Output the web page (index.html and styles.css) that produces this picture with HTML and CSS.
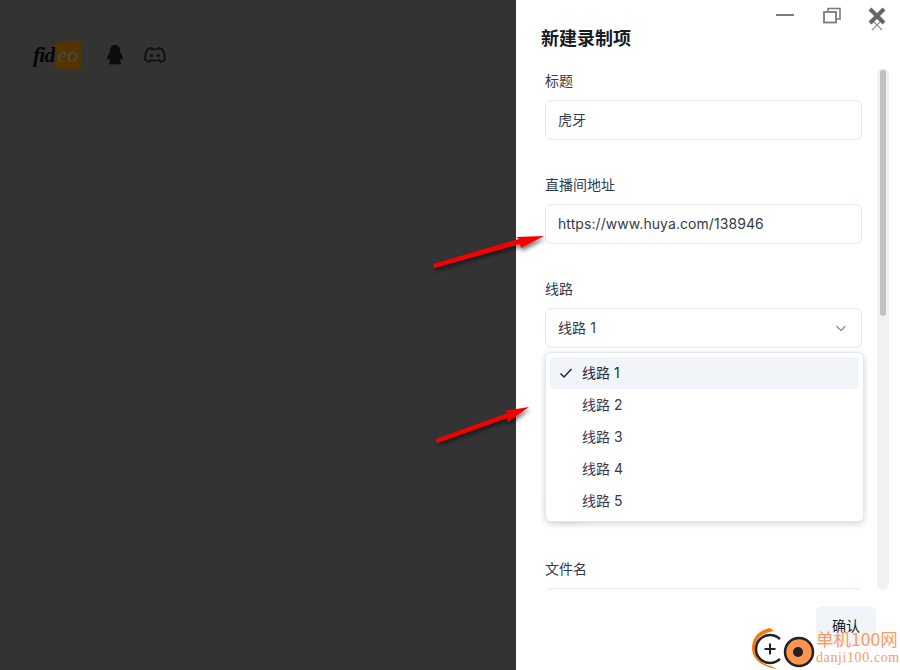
FILE: index.html
```html
<!DOCTYPE html>
<html lang="zh-CN">
<head>
    <meta charset="UTF-8">
    <title>新建录制项</title>
    <link rel="stylesheet" href="styles.css">
</head>
<body>
    <div class="backdrop">
        <div class="brand">
            <div class="logo"><span class="logo-fid">fid</span><span class="logo-eo">eo</span></div>
            <svg class="social" width="20" height="22" viewBox="0 0 20 22">
                <path fill="#0c0c0c" d="M10 1c-3.300 0-5 2.500-5 5.500 0 1.300-.5 2.300-1.200 3.500C2.800 11.800 2 13.500 2 15.300c0 .8.500 1 1.200.3l.8-1c.3 1.200.8 2.100 1.600 2.900-1 .4-1.800 1-1.800 1.700 0 .9 1.700 1.300 3.500 1.300 1.200 0 2.100-.3 2.700-.8.600.5 1.500.8 2.700.8 1.800 0 3.500-.4 3.500-1.300 0-.7-.8-1.300-1.800-1.700.8-.8 1.300-1.700 1.600-2.900l.8 1c.7.700 1.200.5 1.200-.3 0-1.800-.8-3.500-1.800-5.300C15.500 8.800 15 7.800 15 6.500 15 3.500 13.300 1 10 1z"/>
            </svg>
            <svg class="social" width="22" height="18" viewBox="0 0 22 18">
                <path fill="none" stroke="#111" stroke-width="1.800" stroke-linejoin="round" d="M7.500 2C5.800 2.300 4.400 2.800 3.300 3.500 1.800 6 1 9.500 1 13.500c1.200 1.200 2.800 2 4.500 2.500l1.200-2c1.400.5 2.900.7 4.300.7s2.900-.2 4.300-.7l1.200 2c1.700-.5 3.300-1.300 4.500-2.500 0-4-.8-7.500-2.300-10C17.600 2.800 16.200 2.300 14.500 2L14 3.300c-2-.3-4-.3-6 0z"/>
                <circle cx="7.600" cy="9.400" r="1.500" fill="#111"/>
                <circle cx="14.400" cy="9.400" r="1.500" fill="#111"/>
            </svg>
        </div>
    </div>

    <div class="drawer">
        <h2 class="drawer-title">新建录制项</h2>

        <div class="scroll-wrap">
            <div class="form-area">
                <div class="field">
                    <label>标题</label>
                    <div class="input">虎牙</div>
                </div>
                <div class="field">
                    <label>直播间地址</label>
                    <div class="input">https://www.huya.com/138946</div>
                </div>
                <div class="field">
                    <label>线路</label>
                    <div class="input select">
                        <span>线路 1</span>
                        <svg width="16" height="16" viewBox="0 0 16 16"><path d="M3.500 6l4.500 4.500L12.500 6" fill="none" stroke="#8b8f96" stroke-width="1.300"/></svg>
                    </div>
                </div>
                <div class="field">
                    <label>清晰度</label>
                    <div class="input"></div>
                </div>
                <div class="field field-switch">
                    <label>自动录制</label>
                    <div class="switch"></div>
                </div>
                <div class="field">
                    <label>文件名</label>
                    <div class="input"></div>
                </div>
            </div>
            <div class="scrollbar"><div class="thumb"></div></div>
        </div>

        <div class="footer">
            <button class="confirm">确认</button>
        </div>

        <ul class="dropdown">
            <li class="option active">
                <svg width="16" height="16" viewBox="0 0 16 16"><path d="M2.500 8.500l3.500 3.500 7.500-8" fill="none" stroke="#1e293b" stroke-width="1.500"/></svg>
                <span>线路 1</span>
            </li>
            <li class="option"><span>线路 2</span></li>
            <li class="option"><span>线路 3</span></li>
            <li class="option"><span>线路 4</span></li>
            <li class="option"><span>线路 5</span></li>
        </ul>

        <div class="win-controls">
            <svg width="18" height="18" viewBox="0 0 18 18"><path d="M0 9h18" stroke="#7b7b7b" stroke-width="2"/></svg>
            <svg width="18" height="18" viewBox="0 0 18 18"><path d="M5 5V2.500h12V13h-4" fill="none" stroke="#7b7b7b" stroke-width="1.600"/><rect x="1" y="6" width="12" height="10.500" fill="none" stroke="#7b7b7b" stroke-width="1.800"/></svg>
            <svg class="win-close" width="18" height="26" viewBox="0 0 18 26">
                <path d="M4 14l10 10M14 14L4 24" stroke="#8c93a0" stroke-width="1.300" fill="none"/>
                <path d="M2 3l14 14M16 3L2 17" stroke="#666" stroke-width="4"/>
            </svg>
        </div>
    </div>

    <!-- annotation arrows pasted over the screenshot -->
    <svg class="arrows" width="900" height="670" viewBox="0 0 900 670">
        <defs>
            <filter id="arrowShadow" x="-20%" y="-40%" width="140%" height="200%"><feDropShadow dx="1" dy="3" stdDeviation="2" flood-color="#000" flood-opacity=".55"/></filter>
        </defs>
        <g fill="#f50000" filter="url(#arrowShadow)">
            <path d="M433 264l86-25-3-2 28-1-23 12-1-4-86 24z"/>
            <path d="M436 439l72-26-4-2 25-4-21 15-1-4-70 25z"/>
        </g>
    </svg>

    <div class="watermark">
        <svg width="66" height="44" viewBox="0 0 66 44">
            <path d="M20 1C9 3 2 11 2 21c0 11 10 19 25 21-2-1-4-2-6-3C11 37 5 30 5 21 5 12 12 6 24 4z" fill="#f47a12"/>
            <circle cx="20" cy="22" r="14" fill="#fff"/>
            <path d="M29.900 12.100A14 14 0 1 0 29.900 31.900" fill="none" stroke="#222" stroke-width="2.500"/>
            <path d="M20 16.500v11M14.500 22h11" stroke="#222" stroke-width="2"/>
            <circle cx="49" cy="25" r="14" fill="#ff9350" stroke="#222" stroke-width="2.500"/>
            <circle cx="48" cy="25" r="5" fill="#222"/>
        </svg>
        <div class="watermark-text">
            <span class="wm-cn">单机100网</span>
            <span class="wm-en">danji100.com</span>
        </div>
    </div>
</body>
</html>
```

FILE: styles.css
```css
* { box-sizing: border-box; }
html, body { margin: 0; height: 100%; }
body {
    display: flex;
    overflow: hidden;
    position: relative;
    font-family: Inter, "Noto Sans CJK SC", sans-serif;
    color: #1e293b;
}

.backdrop { width: 516px; height: 670px; background: #333333; padding: 38px 0 0 33px; }
.brand { display: flex; align-items: center; height: 34px; }
.logo { display: flex; align-items: center; margin-right: 24px; }
.logo-fid { font: italic 700 22px/28px "Liberation Serif", serif; color: #050505; letter-spacing: -1px; width: 22px; }
.logo-eo { width: 26px; height: 28px; background: #523400; border-radius: 2px; font: italic 22px/27px "Liberation Serif", serif; color: #4a4a4a; text-align: center; }
.social + .social { margin-left: 19px; }

.drawer { width: 384px; height: 670px; background: #fff; position: relative; padding: 26px 10px 0 25px; }
.drawer-title { margin: 0; font-size: 18px; line-height: 25px; font-weight: 700; color: #151c28; }

.scroll-wrap { display: flex; height: 539px; }
.form-area { width: 321px; height: 539px; overflow: hidden; padding: 20px 0 0 4px; }
.field { height: 104px; }
.field label { display: block; font-size: 14px; line-height: 20px; margin-bottom: 9px; color: #333b48; }
.input { height: 40px; border: 1px solid #e2e8f0; border-radius: 6px; padding: 0 12px; font-size: 14px; line-height: 38px; color: #333b48; letter-spacing: .07px; }
.select { display: flex; align-items: center; justify-content: space-between; }
.field-switch { height: 72px; }
.switch { width: 36px; height: 20px; margin: -22px 0 0 5px; border-radius: 10px; background: #e2e8f0; box-shadow: 0 4px 12px rgba(15,23,42,.14); }

.scrollbar { width: 12px; height: 522px; margin: 17px 0 0 12px; background: #f1f1f1; border-radius: 6px; padding: 2px 3px; position: relative; left: 3px; }
.thumb { height: 246px; background: #c1c1c1; border-radius: 4px; }

.footer { display: flex; justify-content: flex-end; padding-right: 14px; margin-top: 16px; }
.confirm { width: 60px; height: 40px; padding: 0 0 2px; border: 0; border-radius: 6px; background: #f1f5f9; font: 14px Inter, "Noto Sans CJK SC", sans-serif; color: #0f172a; }

.dropdown { position: absolute; left: 29px; top: 352px; width: 319px; height: 170px; margin: 0; padding: 4px; list-style: none; background: #fff; border: 1px solid #e2e8f0; border-radius: 6px; box-shadow: 0 2px 6px rgba(15,23,42,.18); }
.option { position: relative; height: 32px; border-radius: 4px; padding-left: 32px; font-size: 14px; line-height: 32px; color: #333b48; }
.option svg { position: absolute; left: 8px; top: 8px; }
.option.active { background: #f1f5f9; color: #1e293b; }

.win-controls { position: absolute; top: 6px; left: 260px; display: flex; gap: 29px; align-items: flex-start; }
.win-close { margin-left: -2px; }

.arrows { position: absolute; left: 0; top: 0; pointer-events: none; }

.watermark { position: absolute; left: 750px; top: 627px; display: flex; width: 150px; }
.watermark-text { display: flex; flex-direction: column; margin-top: 1px; white-space: nowrap; }
.wm-cn { font: 17.5px/22px "Noto Sans CJK SC", serif; color: #ff9a63; }
.wm-en { font: 14px/15px "Liberation Serif", serif; color: #ff9a63; letter-spacing: .6px; }
```
